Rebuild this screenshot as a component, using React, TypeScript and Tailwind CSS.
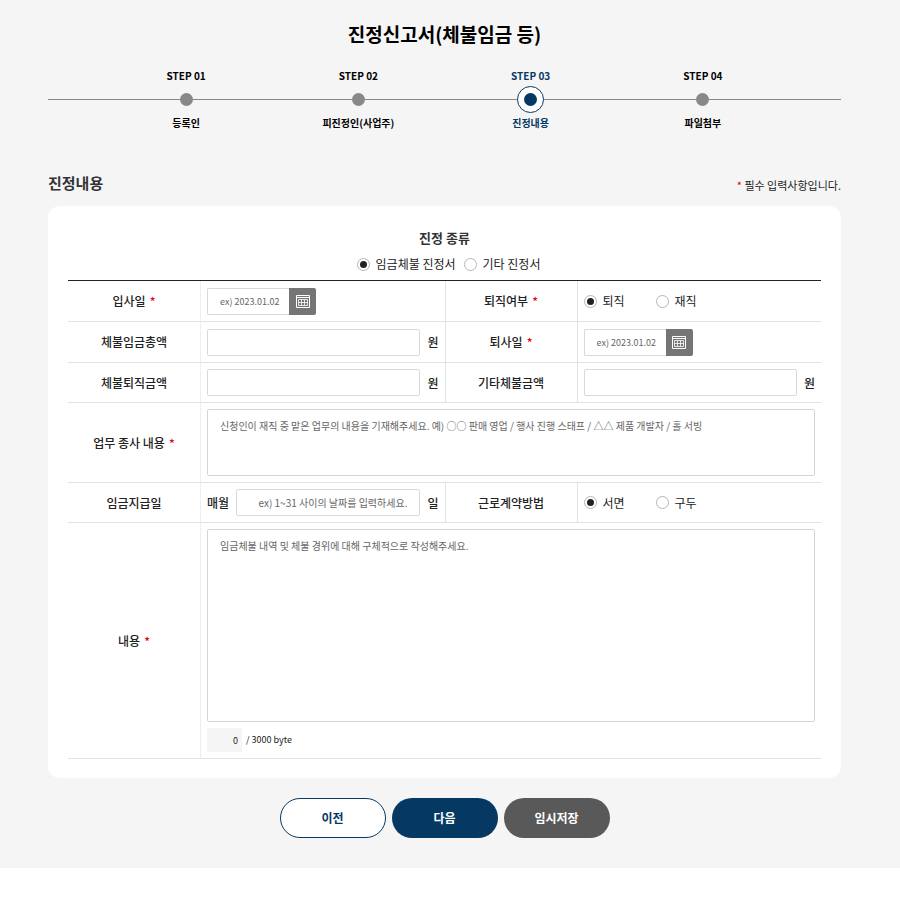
import { useState } from "react";
import type { ReactNode } from "react";

const steps = [
  { step: "STEP 01", label: "등록인" },
  { step: "STEP 02", label: "피진정인(사업주)" },
  { step: "STEP 03", label: "진정내용", active: true },
  { step: "STEP 04", label: "파일첨부" },
];

const inputClass =
  "h-[27px] min-w-0 rounded-xs border border-[#d9d9d9] bg-white px-3 text-[10px] placeholder:text-[#666] outline-none focus:border-[#053863]";

const textareaClass =
  "block w-full resize-none rounded-xs border border-[#d5d5d5] px-3 py-1.5 text-[10px] outline-none placeholder:text-[#666]";

const Required = () => <span className="ml-1 text-[#e60012]">*</span>;

const Head = ({ htmlFor, required, first, children }: { htmlFor?: string; required?: boolean; first?: boolean; children: ReactNode }) => (
  <th
    scope="row"
    className={
      first
        ? "border-b border-[#e2e2e2] font-medium"
        : "border-b border-l border-[#e2e2e2] font-medium"
    }
  >
    <label htmlFor={htmlFor}>
      {children}
      {required && <Required />}
    </label>
  </th>
);

const Cell = ({ colSpan, children }: { colSpan?: number; children: ReactNode }) => (
  <td colSpan={colSpan} className="border-b border-l border-[#e2e2e2] px-1.5 py-1.5 first-of-type:border-l-[#eee]">
    {children}
  </td>
);

const CalendarIcon = () => (
  <svg width="14" height="14" viewBox="0 0 14 14" fill="none" stroke="#fff" aria-hidden="true">
    <path d="M.5 1.5h13v12H.5z" />
    <path d="M1 3.5h12" />
    <path d="M2.5 5.5h9v6h-9zM2.5 8.5h9M5.5 5.5v6M8.5 5.5v6" strokeOpacity="0.8" />
  </svg>
);

const DateField = ({ id }: { id: string }) => (
  <div className="flex h-[27px]">
    <input
      id={id}
      type="text"
      placeholder="ex) 2023.01.02"
      className="w-[82px] rounded-l-xs border border-r-0 border-[#d9d9d9] pt-0.5 pl-3 text-[9px] outline-none placeholder:text-[#666]"
    />
    <button type="button" aria-label="달력" className="flex w-[27px] items-center justify-center rounded-r-xs bg-[#757575]">
      <CalendarIcon />
    </button>
  </div>
);

const WonField = ({ id }: { id: string }) => (
  <div className="flex items-center gap-[7px]">
    <input id={id} type="text" className={`${inputClass} flex-1`} />
    <span className="font-medium">원</span>
  </div>
);

const Radio = ({ name, label, checked, className }: { name: string; label: string; checked?: boolean; className?: string }) => (
  <label className={`flex items-center gap-1.5 ${className ?? ""}`}>
    <input
      type="radio"
      name={name}
      defaultChecked={checked}
      className="flex size-[13px] appearance-none items-center justify-center rounded-full border border-[#b5b5b5] bg-white before:size-[7px] before:rounded-full checked:before:bg-[#222]"
    />
    {label}
  </label>
);

const Steps = () => (
  <div className="relative mt-[18px]">
    <div className="absolute inset-x-0 top-[33px] h-px bg-[#888]" />
    <ol className="relative grid grid-cols-4 px-[52px] text-center text-[10px] leading-5 font-bold">
      {steps.map((item) => (
        <li
          key={item.step}
          aria-current={item.active ? "step" : undefined}
          className={item.active ? "flex flex-col items-center text-[#053863]" : "flex flex-col items-center text-black"}
        >
          <span>{item.step}</span>
          {item.active ? (
            <span className="flex size-[27px] items-center justify-center rounded-full border border-[#053863] bg-white">
              <span className="size-[13px] rounded-full bg-[#053863]" />
            </span>
          ) : (
            <span className="flex size-[27px] items-center justify-center">
              <span className="size-[13px] rounded-full bg-[#888]" />
            </span>
          )}
          <span>{item.label}</span>
        </li>
      ))}
    </ol>
  </div>
);

const App = () => {
  const [content, setContent] = useState("");
  const bytes = new TextEncoder().encode(content).length;

  return (
    <div className="min-h-screen bg-white font-['Noto_Sans_CJK_KR',sans-serif] text-[12px] leading-5 text-[#222]">
      <main className="bg-[#f5f5f5] pt-5 pr-[59px] pb-[30px] pl-12">
        <h1 className="text-center text-[19px] leading-7 font-bold text-black">진정신고서(체불임금 등)</h1>
        <Steps />

        <form onSubmit={(e) => e.preventDefault()}>
          <div className="mt-[38px] flex items-end justify-between">
            <h2 className="text-[15px] leading-6 font-bold text-[#333]">진정내용</h2>
            <p className="text-[11px]">
              <span className="text-[#e60012]">*</span> 필수 입력사항입니다.
            </p>
          </div>

          <section className="mt-[11px] rounded-xl bg-white px-5 pt-[22px] pb-[19px]">
            <fieldset>
              <legend className="w-full text-center text-[13px] font-bold text-[#333]">진정 종류</legend>
              <div className="flex h-8 items-center justify-center gap-2 pl-2">
                <Radio name="kind" label="임금체불 진정서" checked />
                <Radio name="kind" label="기타 진정서" />
              </div>
            </fieldset>

            <table className="w-full table-fixed border-separate border-spacing-0 border-t border-[#222]">
              <colgroup>
                <col className="w-[132px]" />
                <col />
                <col className="w-[132px]" />
                <col />
              </colgroup>
              <tbody>
                <tr className="h-[41px]">
                  <Head htmlFor="join" required first>입사일</Head>
                  <Cell><DateField id="join" /></Cell>
                  <Head required>퇴직여부</Head>
                  <Cell>
                    <div className="flex">
                      <Radio name="retired" label="퇴직" checked className="w-[72px]" />
                      <Radio name="retired" label="재직" />
                    </div>
                  </Cell>
                </tr>
                <tr className="h-[41px]">
                  <Head htmlFor="wage" first>체불임금총액</Head>
                  <Cell><WonField id="wage" /></Cell>
                  <Head htmlFor="leave" required>퇴사일</Head>
                  <Cell><DateField id="leave" /></Cell>
                </tr>
                <tr>
                  <Head htmlFor="severance" first>체불퇴직금액</Head>
                  <Cell><WonField id="severance" /></Cell>
                  <Head htmlFor="etc">기타체불금액</Head>
                  <Cell><WonField id="etc" /></Cell>
                </tr>
                <tr>
                  <Head htmlFor="work" required first>업무 종사 내용</Head>
                  <Cell colSpan={3}>
                    <textarea
                      id="work"
                      placeholder="신청인이 재직 중 맡은 업무의 내용을 기재해주세요. 예) ○○ 판매 영업 / 행사 진행 스태프 / △△ 제품 개발자 / 홀 서빙"
                      className={`${textareaClass} h-[67px]`}
                    />
                  </Cell>
                </tr>
                <tr>
                  <Head htmlFor="payday" first>임금지급일</Head>
                  <Cell>
                    <div className="flex items-center gap-[7px] font-medium">
                      <span>매월</span>
                      <input
                        id="payday"
                        type="text"
                        placeholder="ex) 1~31 사이의 날짜를 입력하세요."
                        className={`${inputClass} flex-1 text-right font-normal`}
                      />
                      <span>일</span>
                    </div>
                  </Cell>
                  <Head>근로계약방법</Head>
                  <Cell>
                    <div className="flex">
                      <Radio name="contract" label="서면" checked className="w-[72px]" />
                      <Radio name="contract" label="구두" />
                    </div>
                  </Cell>
                </tr>
                <tr>
                  <Head htmlFor="content" required first>내용</Head>
                  <Cell colSpan={3}>
                    <textarea
                      id="content"
                      value={content}
                      onChange={(e) => setContent(e.target.value)}
                      placeholder="임금체불 내역 및 체불 경위에 대해 구체적으로 작성해주세요."
                      className={`${textareaClass} h-[193px]`}
                    />
                    <div className="mt-1.5 flex h-6 items-center gap-1 text-[9px]">
                      <input
                        type="text"
                        readOnly
                        aria-label="입력한 바이트"
                        value={bytes}
                        className="h-6 w-[35px] bg-[#f5f5f5] pr-1 text-right outline-none"
                      />
                      <span>/ 3000 byte</span>
                    </div>
                  </Cell>
                </tr>
              </tbody>
            </table>
          </section>

          <div className="mt-5 flex justify-center gap-1.5 text-[12px] font-bold">
            <button type="button" className="h-10 w-[106px] rounded-full border border-[#053863] bg-white text-[#053863]">
              이전
            </button>
            <button type="submit" className="h-10 w-[106px] rounded-full bg-[#053863] text-white">
              다음
            </button>
            <button type="button" className="h-10 w-[106px] rounded-full bg-[#595959] text-white">
              임시저장
            </button>
          </div>
        </form>
      </main>
    </div>
  );
};

export default App;
